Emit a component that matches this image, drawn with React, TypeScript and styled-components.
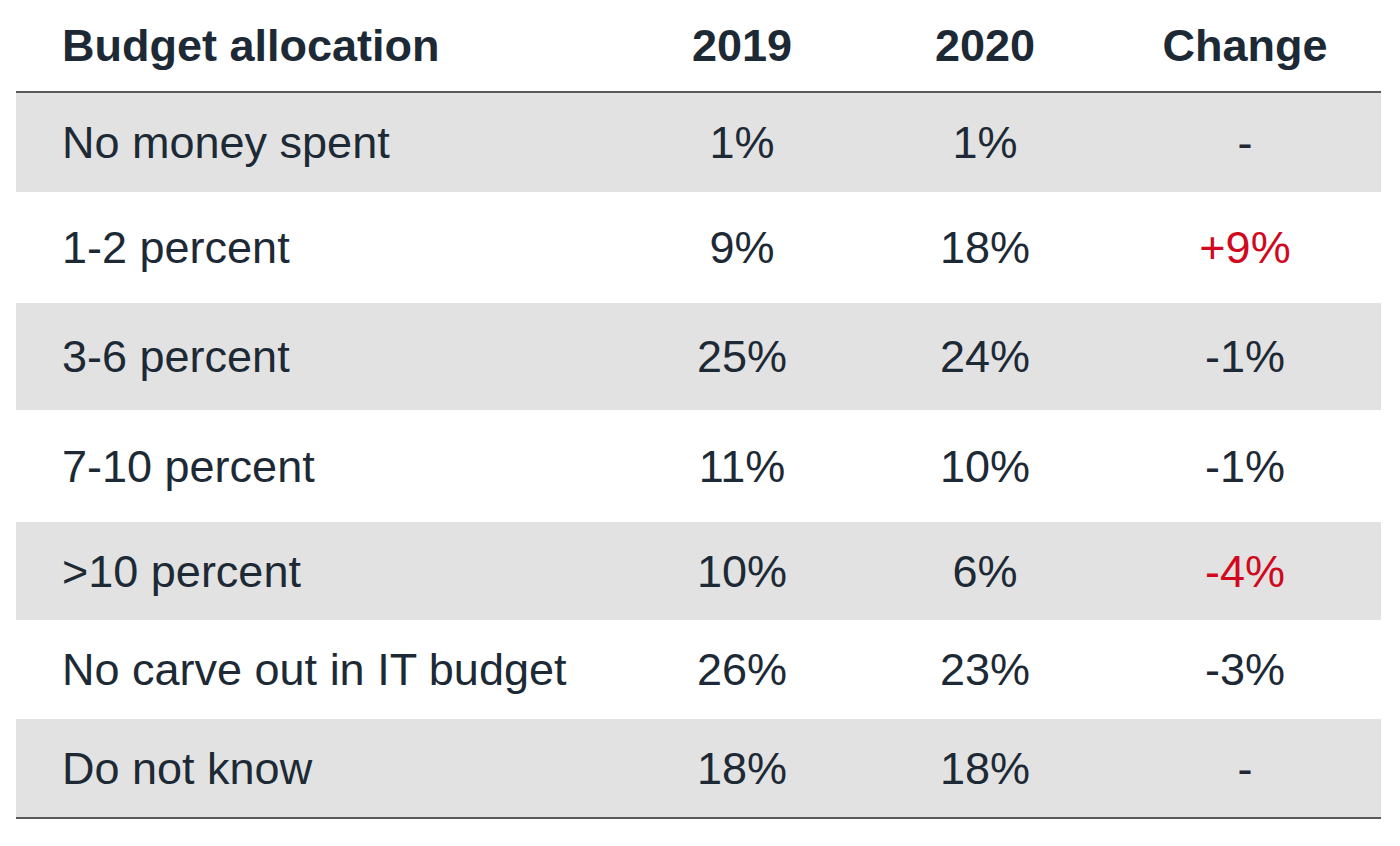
import { createGlobalStyle, styled } from "styled-components";

const GlobalStyle = createGlobalStyle`
  body {
    margin: 0;
    background: #ffffff;
    font-family: "Liberation Sans", Arial, sans-serif;
  }
`;

const Table = styled.div`
  width: 1365px;
  margin-left: 16px;
  color: #1d2a36;
  border-bottom: 2px solid #5a5a5a;
`;

const Row = styled.div<{ $h: number; $shaded?: boolean; $head?: boolean }>`
  display: grid;
  grid-template-columns: 607px 238px 248px 272px;
  align-items: center;
  height: ${(p) => p.$h}px;
  background: ${(p) => (p.$shaded ? "#e2e2e2" : "transparent")};
  font-size: 45px;
  line-height: 1;
  font-weight: ${(p) => (p.$head ? 700 : 400)};
  border-bottom: ${(p) => (p.$head ? "2px solid #5a5a5a" : "none")};
  box-sizing: border-box;
`;

const Label = styled.div`
  padding-left: 46px;
  white-space: nowrap;
`;

const Cell = styled.div<{ $red?: boolean }>`
  text-align: center;
  color: ${(p) => (p.$red ? "#d0091e" : "inherit")};
`;

const rows = [
  { label: "No money spent", a: "1%", b: "1%", c: "-", h: 99 },
  { label: "1-2 percent", a: "9%", b: "18%", c: "+9%", red: true, h: 111 },
  { label: "3-6 percent", a: "25%", b: "24%", c: "-1%", h: 107 },
  { label: "7-10 percent", a: "11%", b: "10%", c: "-1%", h: 112 },
  { label: ">10 percent", a: "10%", b: "6%", c: "-4%", red: true, h: 98 },
  { label: "No carve out in IT budget", a: "26%", b: "23%", c: "-3%", h: 99 },
  { label: "Do not know", a: "18%", b: "18%", c: "-", h: 98 },
];

const App = () => {
  return (
    <>
      <GlobalStyle />
      <Table>
        <Row $h={93} $head>
          <Label>Budget allocation</Label>
          <Cell>2019</Cell>
          <Cell>2020</Cell>
          <Cell>Change</Cell>
        </Row>
        {rows.map((r, i) => (
          <Row key={r.label} $h={r.h} $shaded={i % 2 === 0}>
            <Label>{r.label}</Label>
            <Cell>{r.a}</Cell>
            <Cell>{r.b}</Cell>
            <Cell $red={r.red}>{r.c}</Cell>
          </Row>
        ))}
      </Table>
    </>
  );
};

export default App;
